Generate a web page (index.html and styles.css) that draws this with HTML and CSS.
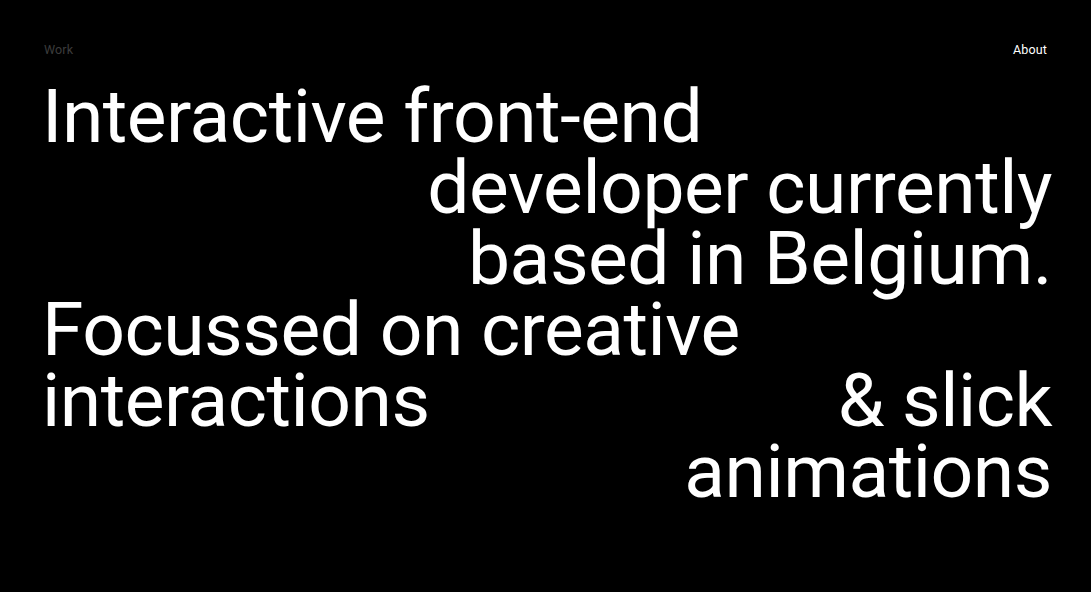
FILE: index.html
```html
<!DOCTYPE html>
<html lang="en">
<head>
<meta charset="utf-8">
<title>Portfolio</title>
<link rel="stylesheet" href="styles.css">
</head>
<body>
<div class="page">
  <nav class="nav">
    <a class="nav-link nav-work" href="#">Work</a>
    <a class="nav-link nav-about" href="#">About</a>
  </nav>
  <h1 class="intro">
    <span class="line left">Interactive front-end</span>
    <span class="line right">developer currently</span>
    <span class="line right">based in Belgium.</span>
    <span class="line left">Focussed on creative</span>
    <span class="line split"><span>interactions</span><span>&amp; slick</span></span>
    <span class="line right">animations</span>
  </h1>
</div>
</body>
</html>
```
FILE: styles.css
```css
html, body {
  margin: 0;
  padding: 0;
  background: #000;
  color: #fff;
}
body {
  font-family: Roboto, "Liberation Sans", sans-serif;
  width: 1091px;
  height: 592px;
  overflow: hidden;
}
.page {
  padding: 0 39px 0 42px;
}
.nav {
  display: flex;
  justify-content: space-between;
  padding: 41px 5px 0 2px;
  height: 18px;
}
.nav-link {
  font-size: 12.5px;
  line-height: 18px;
  text-decoration: none;
  letter-spacing: 0.01em;
}
.nav-work { color: #3c3c3c; }
.nav-about { color: #fff; }
.intro {
  margin: 22px 0 0 0;
  font-weight: 400;
  font-size: 75px;
  line-height: 71px;
  letter-spacing: -0.5px;
}
.line {
  display: block;
  white-space: nowrap;
}
.left { text-align: left; }
.right { text-align: right; }
.split {
  display: flex;
  justify-content: space-between;
}
```
